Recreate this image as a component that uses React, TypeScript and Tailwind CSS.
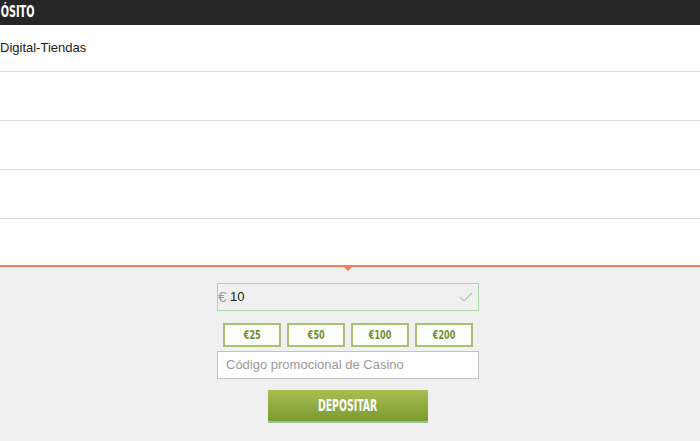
import React from 'react';

const condensed = { fontFamily: '"DejaVu Sans Condensed", "DejaVu Sans", sans-serif' };

const amounts = ['€25', '€50', '€100', '€200'];

// Empty payment-method rows under the first one
const Row: React.FC<{ label?: string }> = ({ label }) => (
  <div className="h-[49px] border-b border-[#dcdcdc] flex items-center text-[13px] text-[#1a1a1a] font-['Liberation_Sans',Arial,sans-serif]">
    {label}
  </div>
);

export default function App() {
  return (
    <div className="w-[700px] h-[441px] overflow-hidden bg-[#f0f0f0] flex flex-col">
      <header className="h-[25px] bg-[#262626] flex items-center shrink-0">
        <span
          className="text-white text-[15px] font-bold [font-stretch:condensed] inline-block origin-left scale-x-[0.72] pl-[1px]"
          style={condensed}
        >
          ÓSITO
        </span>
      </header>

      <div className="bg-white">
        <div className="h-[47px] border-b border-[#dcdcdc] flex items-center text-[13px] text-[#1a1a1a] font-['Liberation_Sans',Arial,sans-serif]">
          Digital-Tiendas
        </div>
        <Row />
        <Row />
        <Row />
        <div className="h-[46px]" />
      </div>

      <div className="relative h-[2px] bg-[#f07f5a] shrink-0">
        <div className="absolute left-[344px] top-[2px] w-0 h-0 border-l-[4px] border-r-[4px] border-t-[4px] border-l-transparent border-r-transparent border-t-[#f07f5a]" />
      </div>

      <div className="flex flex-col items-center pt-[16px] pr-[4px]">
        <div className="w-[262px] h-[28px] border border-[#a9d9a4] flex items-center font-['Liberation_Sans',Arial,sans-serif]">
          <span className="text-[#9a9a9a] text-[15px] w-[12px]">€</span>
          <span className="text-[13px] text-[#1a1a1a]">10</span>
          <svg className="ml-auto mr-[5px]" width="14" height="10" viewBox="0 0 14 10" fill="none">
            <path d="M1 5l4 4 8-8" stroke="#9ed39a" strokeWidth="1.2" />
          </svg>
        </div>

        <div className="flex gap-[6px] mt-[12px]">
          {amounts.map((a) => (
            <div
              key={a}
              className="w-[58px] h-[24px] bg-white border-2 border-[#a8c06c] flex items-center justify-center"
            >
              <span
                className="text-[#6f8f2e] text-[12px] font-bold [font-stretch:condensed] inline-block scale-x-[0.75]"
                style={condensed}
              >
                {a}
              </span>
            </div>
          ))}
        </div>

        <div className="w-[262px] h-[28px] mt-[4px] bg-white border border-[#c3c3c3] flex items-center pl-[8px] text-[13px] text-[#9a9a9a] font-['Liberation_Sans',Arial,sans-serif]">
          Código promocional de Casino
        </div>

        <button className="w-[160px] h-[33px] mt-[11px] bg-gradient-to-b from-[#a6bf53] to-[#7b9a2f] border-b-2 border-[#8cc7a0] flex items-center justify-center">
          <span
            className="text-white text-[16px] font-bold [font-stretch:condensed] inline-block scale-x-[0.65]"
            style={condensed}
          >
            DEPOSITAR
          </span>
        </button>
      </div>
    </div>
  );
}
